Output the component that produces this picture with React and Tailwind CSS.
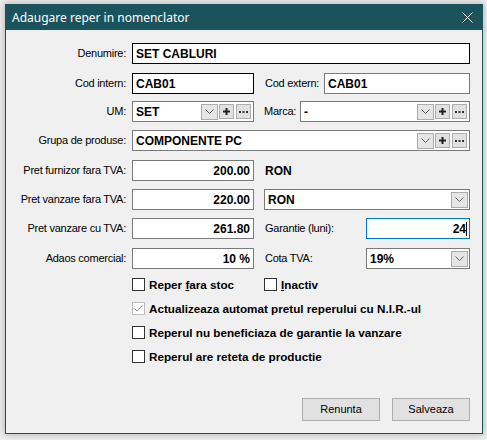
import React from "react";

function Chevron() {
  return (
    <svg width="9" height="5" viewBox="0 0 9 5">
      <polyline points="0.5,0.5 4.5,4.5 8.5,0.5" fill="none" stroke="#606060" strokeWidth="1" />
    </svg>
  );
}

function DropBtn() {
  return (
    <div className="w-[17px] h-[16px] bg-[#e5e5e5] border border-[#acacac] flex items-center justify-center">
      <Chevron />
    </div>
  );
}

function PlusBtn() {
  return (
    <div className="w-[15px] h-[15px] bg-[#e1e1e1] border border-[#adadad] flex items-center justify-center">
      <svg width="7" height="7" viewBox="0 0 7 7">
        <rect x="2.5" y="0" width="2" height="7" fill="#222" />
        <rect x="0" y="2.5" width="7" height="2" fill="#222" />
      </svg>
    </div>
  );
}

function DotsBtn() {
  return (
    <div className="w-[15px] h-[15px] bg-[#e1e1e1] border border-[#adadad] flex items-center justify-center">
      <svg width="9" height="2" viewBox="0 0 9 2">
        <rect x="0" y="0" width="2" height="2" fill="#333" />
        <rect x="3.5" y="0" width="2" height="2" fill="#333" />
        <rect x="7" y="0" width="2" height="2" fill="#333" />
      </svg>
    </div>
  );
}

function Label({ children, className }) {
  return <div className={"text-[11px] tracking-[-0.25px] text-black whitespace-nowrap " + className}>{children}</div>;
}

function Combo({ value, className, border }) {
  return (
    <div className={"h-[21px] bg-white border flex items-center pl-[3px] pr-[2px] " + border + " " + className}>
      <div className="flex-1 font-bold text-[12px] truncate">{value}</div>
      <DropBtn />
      <div className="ml-[1px]"><PlusBtn /></div>
      <div className="ml-[2px]"><DotsBtn /></div>
    </div>
  );
}

function Select({ value, className }) {
  return (
    <div className={"h-[21px] bg-white border border-[#7a7a7a] flex items-center pl-[3px] pr-[1px] " + className}>
      <div className="flex-1 font-bold text-[12px]">{value}</div>
      <DropBtn />
    </div>
  );
}

function Box({ children, className, border }) {
  return (
    <div className={"h-[21px] bg-white border flex items-center px-[3px] font-bold text-[12px] " + border + " " + className}>
      {children}
    </div>
  );
}

function Check({ checked }) {
  if (checked) {
    return (
      <div className="w-[13px] h-[13px] bg-white border border-[#bcbcbc] flex items-center justify-center">
        <svg width="9" height="7" viewBox="0 0 9 7">
          <polyline points="0.5,3.5 3,6 8.5,0.5" fill="none" stroke="#8c8c8c" strokeWidth="1" />
        </svg>
      </div>
    );
  }
  return <div className="w-[13px] h-[13px] bg-white border border-[#333333]" />;
}

export default function App() {
  return (
    <div className="w-[487px] h-[440px] bg-[#f0f0f0] pt-[4px] pl-[5px] font-['Liberation_Sans',Arial,sans-serif] text-black">
      <div className="w-[478px] h-[430px] flex flex-col bg-[#1b535d] border border-[#1b535d] shadow-[0_0_7px_1px_rgba(0,0,0,0.25)]">
        <div className="h-[25px] flex items-center pl-[6px] pr-[9px] text-white">
          <div className="flex-1 font-['Noto_Sans',sans-serif] text-[12px]">Adaugare reper in nomenclator</div>
          <svg width="11" height="11" viewBox="0 0 11 11">
            <line x1="0.5" y1="0.5" x2="10.5" y2="10.5" stroke="white" strokeWidth="1" />
            <line x1="10.5" y1="0.5" x2="0.5" y2="10.5" stroke="white" strokeWidth="1" />
          </svg>
        </div>
        <div className="flex-1 bg-[#f0f0f0] flex flex-col pt-[13px] pr-[12px] pb-[12px]">
          <div className="flex items-center">
            <Label className="w-[120px] text-right">Denumire:</Label>
            <Box className="ml-[6px] flex-1" border="border-black">SET CABLURI</Box>
          </div>
          <div className="flex items-center mt-[9px]">
            <Label className="w-[120px] text-right">Cod intern:</Label>
            <Box className="ml-[6px] w-[122px]" border="border-black">CAB01</Box>
            <Label className="ml-[10px] w-[60px] pl-[1px]">Cod extern:</Label>
            <Box className="flex-1" border="border-[#7a7a7a]">CAB01</Box>
          </div>
          <div className="flex items-center mt-[7px]">
            <Label className="w-[120px] text-right">UM:</Label>
            <Combo value="SET" className="ml-[6px] w-[122px]" border="border-[#7a7a7a]" />
            <Label className="ml-[10px] w-[36px]">Marca:</Label>
            <Combo value="-" className="flex-1" border="border-[#7a7a7a]" />
          </div>
          <div className="flex items-center mt-[8px]">
            <Label className="w-[120px] text-right">Grupa de produse:</Label>
            <Combo value="COMPONENTE PC" className="ml-[6px] flex-1" border="border-[#7a7a7a]" />
          </div>
          <div className="flex items-center mt-[9px]">
            <Label className="w-[120px] text-right">Pret furnizor fara TVA:</Label>
            <Box className="ml-[6px] w-[122px] justify-end" border="border-[#7a7a7a]">200.00</Box>
            <div className="ml-[11px] font-bold text-[12px]">RON</div>
          </div>
          <div className="flex items-center mt-[8px]">
            <Label className="w-[120px] text-right">Pret vanzare fara TVA:</Label>
            <Box className="ml-[6px] w-[122px] justify-end" border="border-[#7a7a7a]">220.00</Box>
            <Select value="RON" className="ml-[10px] flex-1" />
          </div>
          <div className="flex items-center mt-[8px]">
            <Label className="w-[120px] text-right">Pret vanzare cu TVA:</Label>
            <Box className="ml-[6px] w-[122px] justify-end" border="border-[#7a7a7a]">261.80</Box>
            <Label className="ml-[10px] w-[102px] pl-[1px]">Garantie (luni):</Label>
            <Box className="flex-1 justify-end pr-[2px]" border="border-[#0078d7]">
              <span>24</span>
              <span className="w-[1px] h-[14px] bg-black" />
            </Box>
          </div>
          <div className="flex items-center mt-[9px]">
            <Label className="w-[120px] text-right">Adaos comercial:</Label>
            <Box className="ml-[6px] w-[122px] justify-end" border="border-[#7a7a7a]">10 %</Box>
            <Label className="ml-[10px] w-[102px] pl-[1px]">Cota TVA:</Label>
            <Select value="19%" className="flex-1" />
          </div>

          <div className="pl-[126px] mt-[9px] flex flex-col gap-[11px] text-[11.7px] font-bold">
            <div className="flex items-center h-[13px]">
              <div className="w-[132px] flex items-center gap-[4px]">
                <Check />
                <span>Reper <span className="underline">f</span>ara stoc</span>
              </div>
              <div className="flex items-center gap-[4px]">
                <Check />
                <span><span className="underline">I</span>nactiv</span>
              </div>
            </div>
            <div className="flex items-center h-[13px] gap-[4px]">
              <Check checked />
              <span>Actualizeaza automat pretul reperului cu N.I.R.-ul</span>
            </div>
            <div className="flex items-center h-[13px] gap-[4px]">
              <Check />
              <span>Reperul nu beneficiaza de garantie la vanzare</span>
            </div>
            <div className="flex items-center h-[13px] gap-[4px]">
              <Check />
              <span>Reperul are reteta de productie</span>
            </div>
          </div>

          <div className="mt-auto flex justify-end gap-[12px]">
            <div className="w-[78px] h-[23px] bg-[#e1e1e1] border border-[#adadad] flex items-center justify-center text-[11px]">Renunta</div>
            <div className="w-[78px] h-[23px] bg-[#e1e1e1] border border-[#adadad] flex items-center justify-center text-[11px]">Salveaza</div>
          </div>
        </div>
      </div>
    </div>
  );
}
